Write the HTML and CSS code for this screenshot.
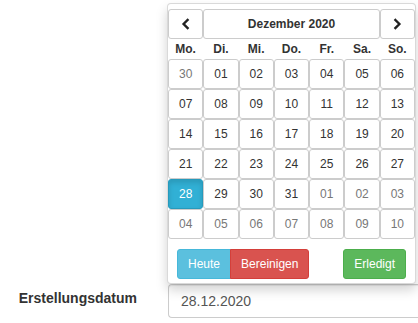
FILE: index.html
```html
<!DOCTYPE html>
<html lang="de">
<head>
<meta charset="utf-8">
<title>Datum</title>
<link rel="stylesheet" href="styles.css">
</head>
<body>
<form class="form">
  <div class="form-row">
    <label class="label" for="datum">Erstellungsdatum</label>
    <div class="field">
      <input id="datum" class="input" type="text" value="28.12.2020" readonly>
      <div class="popup">
        <div class="grid">
          <button type="button" class="cell nav"><svg class="chev" viewBox="0 0 12 12" width="12" height="12"><polyline points="7.6,2 3.6,6 7.6,10" fill="none" stroke="#222" stroke-width="2.4" stroke-linecap="square" stroke-linejoin="miter"/></svg></button>
          <button type="button" class="cell title">Dezember 2020</button>
          <button type="button" class="cell nav"><svg class="chev" viewBox="0 0 12 12" width="12" height="12"><polyline points="4.4,2 8.4,6 4.4,10" fill="none" stroke="#222" stroke-width="2.4" stroke-linecap="square" stroke-linejoin="miter"/></svg></button>

          <div class="wd">Mo.</div><div class="wd">Di.</div><div class="wd">Mi.</div><div class="wd">Do.</div><div class="wd">Fr.</div><div class="wd">Sa.</div><div class="wd">So.</div>

          <button type="button" class="cell muted">30</button><button type="button" class="cell">01</button><button type="button" class="cell">02</button><button type="button" class="cell">03</button><button type="button" class="cell">04</button><button type="button" class="cell">05</button><button type="button" class="cell">06</button>
          <button type="button" class="cell">07</button><button type="button" class="cell">08</button><button type="button" class="cell">09</button><button type="button" class="cell">10</button><button type="button" class="cell">11</button><button type="button" class="cell">12</button><button type="button" class="cell">13</button>
          <button type="button" class="cell">14</button><button type="button" class="cell">15</button><button type="button" class="cell">16</button><button type="button" class="cell">17</button><button type="button" class="cell">18</button><button type="button" class="cell">19</button><button type="button" class="cell">20</button>
          <button type="button" class="cell">21</button><button type="button" class="cell">22</button><button type="button" class="cell">23</button><button type="button" class="cell">24</button><button type="button" class="cell">25</button><button type="button" class="cell">26</button><button type="button" class="cell">27</button>
          <button type="button" class="cell active">28</button><button type="button" class="cell">29</button><button type="button" class="cell">30</button><button type="button" class="cell">31</button><button type="button" class="cell muted">01</button><button type="button" class="cell muted">02</button><button type="button" class="cell muted">03</button>
          <button type="button" class="cell muted">04</button><button type="button" class="cell muted">05</button><button type="button" class="cell muted">06</button><button type="button" class="cell muted">07</button><button type="button" class="cell muted">08</button><button type="button" class="cell muted">09</button><button type="button" class="cell muted">10</button>
        </div>
        <div class="bar">
          <div class="btn-group">
            <button type="button" class="btn btn-info">Heute</button><button type="button" class="btn btn-danger">Bereinigen</button>
          </div>
          <button type="button" class="btn btn-success">Erledigt</button>
        </div>
      </div>
    </div>
  </div>
</form>
</body>
</html>
```

FILE: styles.css
```css
html, body {
  margin: 0;
  padding: 0;
  overflow: hidden;
  background: #fff;
}
body {
  font-family: "Liberation Sans", Arial, Helvetica, sans-serif;
  font-size: 14px;
  line-height: 20px;
  color: #333;
}
.form {
  margin: 0;
  padding-top: 284px;
}
.form-row {
  display: flex;
  align-items: flex-start;
}
.label {
  flex: 0 0 auto;
  box-sizing: border-box;
  width: 168px;
  padding: 4px 31px 0 0;
  text-align: right;
  font-weight: bold;
  font-size: 14px;
  line-height: 20px;
  color: #333;
}
.field {
  position: relative;
  flex: 1 1 auto;
  min-width: 0;
}
.input {
  display: block;
  box-sizing: border-box;
  width: 100%;
  height: 34px;
  margin: 0;
  padding: 6px 12px;
  border: 1px solid #ccc;
  border-right-width: 0;
  border-radius: 4px 0 0 4px;
  background: #fff;
  box-shadow: inset 0 1px 1px rgba(0,0,0,.075);
  font-family: inherit;
  font-size: 14px;
  line-height: 20px;
  color: #555;
  outline: none;
}
.popup {
  position: absolute;
  left: -1px;
  bottom: 100%;
  z-index: 10;
  box-sizing: border-box;
  width: 249px;
  padding: 5px 0 2px;
  background: #fff;
  border: 1px solid rgba(0,0,0,.15);
  border-radius: 4px;
  box-shadow: 0 6px 12px rgba(0,0,0,.175);
}
.grid {
  display: grid;
  grid-template-columns: repeat(7, 1fr);
  grid-template-rows: 30px 20px repeat(6, 30px);
}
.cell {
  box-sizing: border-box;
  width: 100%;
  height: 30px;
  margin: 0;
  padding: 5px 0;
  border: 1px solid #ccc;
  border-radius: 3px;
  background: #fff;
  font-family: inherit;
  font-size: 12px;
  line-height: 18px;
  color: #333;
  text-align: center;
  cursor: pointer;
}
.cell.muted {
  color: #777;
}
.cell.active {
  background: #31b0d5;
  border-color: #269abc;
  color: #fff;
  box-shadow: inset 0 3px 5px rgba(0,0,0,.125);
}
.title {
  grid-column: span 5;
  font-weight: bold;
}
.nav {
  display: flex;
  align-items: center;
  justify-content: center;
}
.chev {
  display: block;
}
.wd {
  text-align: center;
  font-weight: bold;
  font-size: 12px;
  line-height: 20px;
  color: #333;
}
.bar {
  display: flex;
  justify-content: space-between;
  align-items: flex-start;
  padding: 10px 9px 2px;
}
.btn-group {
  display: flex;
}
.btn {
  box-sizing: border-box;
  height: 30px;
  margin: 0;
  padding: 5px 10px;
  border: 1px solid transparent;
  border-radius: 3px;
  font-family: inherit;
  font-size: 12px;
  line-height: 18px;
  color: #fff;
  cursor: pointer;
}
.btn-group .btn:first-child {
  border-top-right-radius: 0;
  border-bottom-right-radius: 0;
}
.btn-group .btn + .btn {
  margin-left: -1px;
  border-top-left-radius: 0;
  border-bottom-left-radius: 0;
}
.btn-info {
  background: #5bc0de;
  border-color: #46b8da;
}
.btn-danger {
  background: #d9534f;
  border-color: #d43f3a;
}
.btn-success {
  background: #5cb85c;
  border-color: #4cae4c;
}
```
